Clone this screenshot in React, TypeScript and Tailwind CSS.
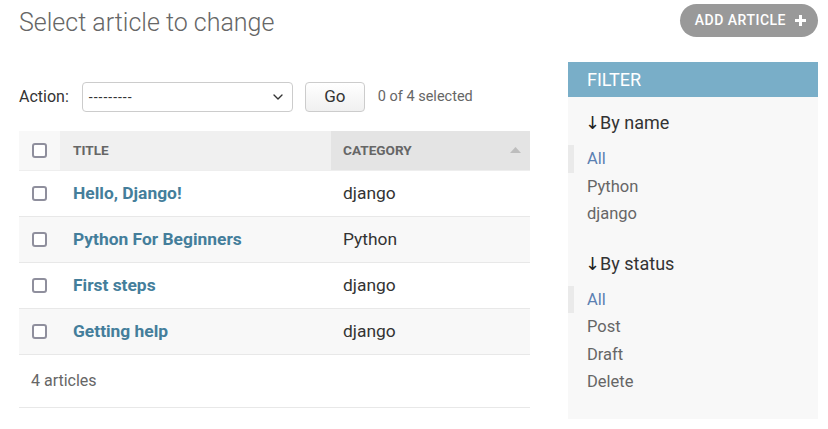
import { ChevronDown } from "lucide-react";

type Article = {
  id: number;
  title: string;
  category: string;
};

const articles: Article[] = [
  { id: 1, title: "Hello, Django!", category: "django" },
  { id: 2, title: "Python For Beginners", category: "Python" },
  { id: 3, title: "First steps", category: "django" },
  { id: 4, title: "Getting help", category: "django" },
];

const filters = [
  { title: "By name", items: ["All", "Python", "django"] },
  { title: "By status", items: ["All", "Post", "Draft", "Delete"] },
];

function Checkbox() {
  return <span className="block w-[15px] h-[15px] border-2 border-[#8f8f9d] rounded-[3px] bg-white" />;
}

export default function App() {
  return (
    <div className="w-[828px] h-[429px] bg-white overflow-hidden font-['Roboto',sans-serif]">
      {/* Header */}
      <div className="h-[62px] flex items-start justify-between pl-[19px] pr-[10px]">
        <h1 className="mt-[7px] text-[25px] leading-[32px] font-light text-[#666]">Select article to change</h1>
        <a className="mt-[4px] h-[33px] flex items-center gap-[9px] pl-[15px] pr-[12px] rounded-full bg-[#999] text-white text-[14px] tracking-[0.5px] font-medium uppercase">
          Add article
          <svg width="11" height="11" viewBox="0 0 11 11">
            <path d="M4 0h3v4h4v3H7v4H4V7H0V4h4z" fill="white" />
          </svg>
        </a>
      </div>

      <div className="flex gap-[38px] pl-[19px]">
        {/* Change list */}
        <div className="w-[511px] pt-[20px]">
          {/* Actions */}
          <div className="flex items-center h-[30px]">
            <label className="text-[16px] text-[#333]">Action:</label>
            <div className="ml-[13px] w-[211px] h-[30px] border border-[#ccc] rounded-[4px] flex items-center justify-between pl-[6px] pr-[6px]">
              <span className="text-[14px] tracking-[1px] text-[#333]">---------</span>
              <ChevronDown size={16} strokeWidth={2} className="text-[#333]" />
            </div>
            <button className="ml-[12px] w-[60px] h-[30px] border border-[#ccc] rounded-[4px] bg-gradient-to-b from-white to-[#f0f0f0] text-[17px] text-[#333]">
              Go
            </button>
            <span className="ml-[13px] text-[14.5px] text-[#666]">0 of 4 selected</span>
          </div>

          {/* Table */}
          <table className="mt-[19px] w-full border-collapse">
            <thead>
              <tr className="h-[39px] border-b border-[#eee]">
                <th className="w-[41px] bg-[#f8f8f8] pl-[13px] text-left">
                  <Checkbox />
                </th>
                <th className="w-[271px] bg-[#f0f0f0] pl-[13px] text-left text-[13.6px] font-bold text-[#666] uppercase">
                  Title
                </th>
                <th className="bg-[#e4e4e4] pl-[12px] text-left text-[13.6px] font-bold text-[#666] uppercase">
                  <div className="flex items-center justify-between pr-[9px]">
                    <span>Category</span>
                    <svg width="11" height="6" viewBox="0 0 11 6">
                      <path d="M0 6L5.5 0 11 6z" fill="#bdbdbd" />
                    </svg>
                  </div>
                </th>
              </tr>
            </thead>
            <tbody>
              {articles.map((a, i) => (
                <tr key={a.id} className={`h-[46px] border-b border-[#e8e8e8] ${i % 2 === 1 ? "bg-[#f8f8f8]" : "bg-white"}`}>
                  <td className="pl-[13px]">
                    <Checkbox />
                  </td>
                  <td className="pl-[13px] text-[17.4px] font-bold text-[#447e9b]">{a.title}</td>
                  <td className="pl-[12px] text-[17.4px] text-[#333]">{a.category}</td>
                </tr>
              ))}
            </tbody>
          </table>
          <div className="h-[53px] flex items-center pl-[12px] border-b border-[#e8e8e8] text-[16px] text-[#666]">
            4 articles
          </div>
        </div>

        {/* Filter sidebar */}
        <div className="w-[250px] h-[357px] bg-[#f8f8f8]">
          <h2 className="h-[35px] bg-[#79aec8] pl-[19px] flex items-center text-white text-[18px] uppercase">Filter</h2>
          {filters.map((f, idx) => (
            <div key={f.title} className={idx === 0 ? "mt-[13px]" : "mt-[23px]"}>
              <h3 className="pl-[17px] h-[26px] leading-[26px] text-[18px] text-[#333] mb-[9px]">
                <span className="font-['DejaVu_Sans',sans-serif] text-[#222]">↓</span>{f.title}
              </h3>
              <ul>
                {f.items.map((item, j) => (
                  <li
                    key={item}
                    className={
                      j === 0
                        ? "h-[27.5px] leading-[27.5px] border-l-[6px] border-[#eaeaea] pl-[13px] text-[16.5px] text-[#5b80b2]"
                        : "h-[27.5px] leading-[27.5px] pl-[19px] text-[16.5px] text-[#666]"
                    }
                  >
                    {item}
                  </li>
                ))}
              </ul>
            </div>
          ))}
        </div>
      </div>
    </div>
  );
}
